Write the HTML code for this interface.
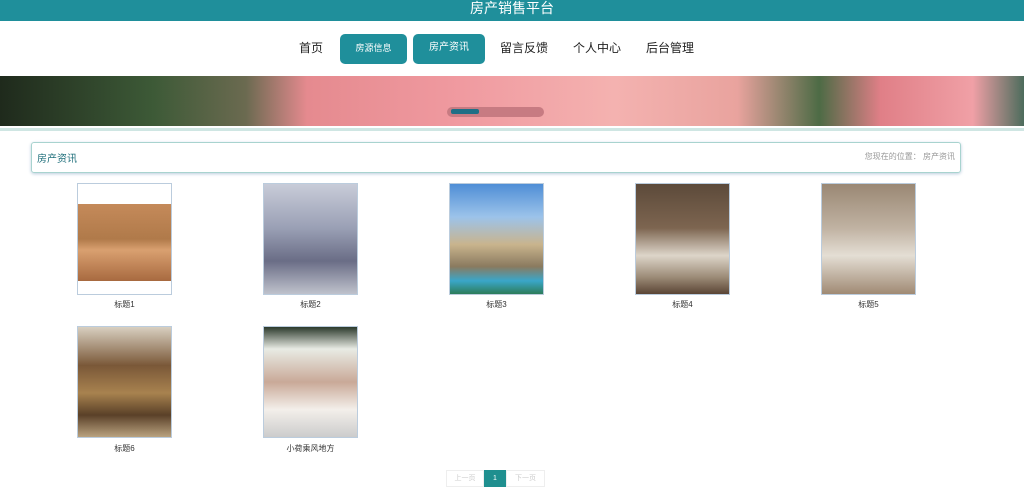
<!DOCTYPE html>
<html><head><meta charset="utf-8"><style>
*{margin:0;padding:0;box-sizing:border-box}
body{width:1024px;height:500px;overflow:hidden;background:#fff;font-family:"Liberation Sans","Noto Sans CJK SC",sans-serif;position:relative}
.top{position:absolute;left:0;top:0;width:1024px;height:21px;background:#1f8f9b;color:#fff;text-align:center;font-size:14px;line-height:16px}
.nav{position:absolute;top:34px;height:30px;font-size:12px;color:#222;line-height:28px}
.btn{background:#1f8f9b;color:#fff;border-radius:5px;text-align:center}
.banner{position:absolute;left:0;top:76px;width:1024px;height:50px;background:linear-gradient(90deg,#1f2a1c 0%,#3d5a37 15%,#6b6a50 24%,#e58a8f 30%,#f09aa0 45%,#f4b2b0 60%,#e9a39e 72%,#4d6b45 80%,#e07f87 86%,#f0a0a6 95%,#4c6c5c 100%)}
.dots{position:absolute;left:447px;top:107px;width:97px;height:10px;border-radius:5px;background:#c77b82}
.dots i{position:absolute;left:4px;top:2px;width:28px;height:5px;background:#1f6f86;border-radius:2px}
.line{position:absolute;left:0;top:128px;width:1024px;height:3px;background:#cfe6e3}
.crumb{position:absolute;left:31px;top:142px;width:930px;height:31px;border:1px solid #a8d3cf;border-radius:3px;box-shadow:0 1px 3px #bcd}
.crumb .l{position:absolute;left:5px;top:7px;font-size:10px;color:#1f6f7b}
.crumb .r{position:absolute;right:5px;top:8px;font-size:8px;color:#999}
.it{position:absolute;width:95px;height:112px;border:1px solid #bcd;}
.lb{position:absolute;width:95px;text-align:center;font-size:8px;color:#333}
.pg{position:absolute;top:470px;height:17px;font-size:7px;line-height:16px;text-align:center;border:1px solid #eee;color:#ccc}
</style></head><body>
<div class="top">房产销售平台</div>
<div class="nav" style="left:299px">首页</div>
<div class="nav btn" style="left:340px;width:67px;font-size:9px">房源信息</div>
<div class="nav btn" style="left:413px;width:72px;font-size:10px">房产资讯</div>
<div class="nav" style="left:500px">留言反馈</div>
<div class="nav" style="left:573px">个人中心</div>
<div class="nav" style="left:646px">后台管理</div>
<div class="banner"></div>
<div class="dots"><i></i></div>
<div class="line"></div>
<div class="crumb"><span class="l">房产资讯</span><span class="r">您现在的位置： 房产资讯</span></div>
<div class="it" style="left:77px;top:183px;background:linear-gradient(#fff 0 18%,#c58a5a 18%,#b07a4a 50%,#d9a070 60%,#a86a40 88%,#fff 88%)"></div>
<div class="it" style="left:263px;top:183px;background:linear-gradient(#c8ccd8 0,#9aa0b5 40%,#6a6d86 70%,#bfc2cc 100%)"></div>
<div class="it" style="left:449px;top:183px;background:linear-gradient(#4f8ed6 0,#9cc3ea 30%,#c9b48d 55%,#8a7a5f 75%,#3aa6c9 88%,#2d7c5a 100%)"></div>
<div class="it" style="left:635px;top:183px;background:linear-gradient(#5c4a3a 0,#7d6550 40%,#ddd5c9 65%,#9b8a76 85%,#5a4535 100%)"></div>
<div class="it" style="left:821px;top:183px;background:linear-gradient(#9a8874 0,#c0b2a2 40%,#e4ded4 65%,#a08a74 100%)"></div>
<div class="lb" style="left:77px;top:299px">标题1</div>
<div class="lb" style="left:263px;top:299px">标题2</div>
<div class="lb" style="left:449px;top:299px">标题3</div>
<div class="lb" style="left:635px;top:299px">标题4</div>
<div class="lb" style="left:821px;top:299px">标题5</div>
<div class="it" style="left:77px;top:326px;background:linear-gradient(#d8cfc0 0,#7a5838 35%,#a8824f 60%,#5a4028 80%,#b9a27f 100%)"></div>
<div class="it" style="left:263px;top:326px;background:linear-gradient(#2c3a2c 0,#e8ebe4 20%,#c9a998 50%,#f3efea 75%,#ccc 100%)"></div>
<div class="lb" style="left:77px;top:443px">标题6</div>
<div class="lb" style="left:263px;top:443px">小荷乘风地方</div>
<div class="pg" style="left:446px;width:38px">上一页</div>
<div class="pg" style="left:484px;width:22px;background:#1f8f8f;color:#fff;border-color:#1f8f8f">1</div>
<div class="pg" style="left:506px;width:39px">下一页</div>
</body></html>
